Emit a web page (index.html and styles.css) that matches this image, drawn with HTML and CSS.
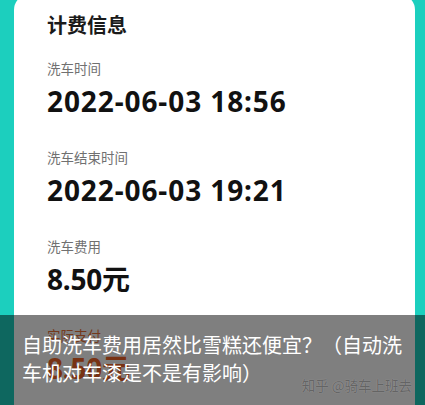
FILE: index.html
```html
<!DOCTYPE html>
<html lang="zh">
<head>
<meta charset="utf-8">
<link rel="stylesheet" href="styles.css">
</head>
<body>
<div class="page">
  <div class="card">
    <h2 class="title">计费信息</h2>
    <div class="row">
      <div class="label">洗车时间</div>
      <div class="value time">2022-06-03 18:56</div>
    </div>
    <div class="row">
      <div class="label">洗车结束时间</div>
      <div class="value time">2022-06-03 19:21</div>
    </div>
    <div class="row">
      <div class="label">洗车费用</div>
      <div class="value">8.50元</div>
    </div>
    <div class="row pay">
      <div class="label">实际支付</div>
      <div class="value">8.50元</div>
    </div>
  </div>
  <div class="caption">
    <p class="caption-text">自助洗车费用居然比雪糕还便宜？（自动洗车机对车漆是不是有影响）</p>
    <span class="watermark">知乎 @骑车上班去</span>
  </div>
</div>
</body>
</html>
```

FILE: styles.css
```css
html, body {
  margin: 0;
  padding: 0;
}
body {
  width: 425px;
  height: 405px;
  overflow: hidden;
  background: #1ccfbe;
  font-family: "Noto Sans", "Noto Sans CJK SC", sans-serif;
}
.page {
  position: relative;
  width: 425px;
  height: 405px;
  overflow: hidden;
}
.card {
  margin: -6px 0 0 14px;
  width: 401px;
  height: 440px;
  box-sizing: border-box;
  background: #ffffff;
  border-radius: 16px;
  padding: 22px 0 0 33px;
}
.title {
  margin: 0 0 26px;
  font-size: 20px;
  line-height: 20px;
  font-weight: 700;
  color: #1a1a1a;
}
.row {
  margin-bottom: 36px;
}
.label {
  font-size: 13.5px;
  line-height: 14px;
  color: #707070;
  margin-bottom: 11px;
}
.value {
  font-size: 28px;
  line-height: 28px;
  font-weight: 700;
  color: #111111;
  letter-spacing: -0.2px;
}
.value.time {
  letter-spacing: 0.9px;
}
.pay .label {
  color: #e8733a;
}
.pay .value {
  color: #f06426;
}
.caption {
  position: absolute;
  left: 0;
  right: 0;
  top: 315px;
  bottom: 0;
  background: rgba(0, 0, 0, 0.5);
  padding: 16px 20px 0 22px;
}
.caption-text {
  margin: 0;
  font-family: "Noto Sans CJK SC", sans-serif;
  font-size: 20px;
  line-height: 28px;
  color: #ffffff;
}
.watermark {
  position: absolute;
  right: 13px;
  bottom: 11px;
  font-family: "Noto Sans CJK SC", sans-serif;
  font-size: 13.5px;
  line-height: 18px;
  color: #646464;
  text-shadow: 0 0 1px rgba(200, 200, 200, 0.6);
}
```
